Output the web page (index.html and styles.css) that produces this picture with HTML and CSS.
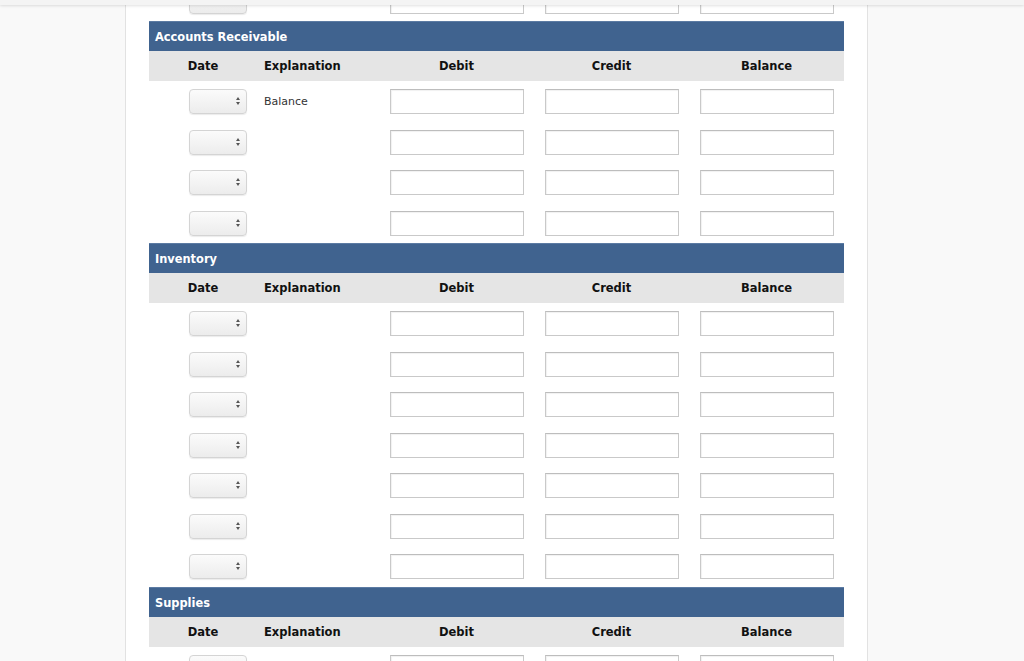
FILE: index.html
```html
<!DOCTYPE html>
<html>
<head>
<meta charset="utf-8">
<link rel="stylesheet" href="styles.css">
</head>
<body>
<div class="topbar"></div>
<div class="page">
  <div class="sheet">
    <div class="row row-cut">
      <div class="c-date"><span class="sel"></span></div>
      <div class="c-exp"></div>
      <div class="c-num"><span class="inp"></span></div>
      <div class="c-num"><span class="inp"></span></div>
      <div class="c-num"><span class="inp"></span></div>
    </div>

    <section class="acct">
      <div class="acct-title">Accounts Receivable</div>
      <div class="row head">
        <div class="c-date">Date</div>
        <div class="c-exp">Explanation</div>
        <div class="c-num">Debit</div>
        <div class="c-num">Credit</div>
        <div class="c-num">Balance</div>
      </div>
      <div class="row">
        <div class="c-date"><span class="sel"></span></div>
        <div class="c-exp">Balance</div>
        <div class="c-num"><span class="inp"></span></div>
        <div class="c-num"><span class="inp"></span></div>
        <div class="c-num"><span class="inp"></span></div>
      </div>
      <div class="row">
        <div class="c-date"><span class="sel"></span></div>
        <div class="c-exp"></div>
        <div class="c-num"><span class="inp"></span></div>
        <div class="c-num"><span class="inp"></span></div>
        <div class="c-num"><span class="inp"></span></div>
      </div>
      <div class="row">
        <div class="c-date"><span class="sel"></span></div>
        <div class="c-exp"></div>
        <div class="c-num"><span class="inp"></span></div>
        <div class="c-num"><span class="inp"></span></div>
        <div class="c-num"><span class="inp"></span></div>
      </div>
      <div class="row">
        <div class="c-date"><span class="sel"></span></div>
        <div class="c-exp"></div>
        <div class="c-num"><span class="inp"></span></div>
        <div class="c-num"><span class="inp"></span></div>
        <div class="c-num"><span class="inp"></span></div>
      </div>
    </section>

    <section class="acct">
      <div class="acct-title">Inventory</div>
      <div class="row head">
        <div class="c-date">Date</div>
        <div class="c-exp">Explanation</div>
        <div class="c-num">Debit</div>
        <div class="c-num">Credit</div>
        <div class="c-num">Balance</div>
      </div>
      <div class="row">
        <div class="c-date"><span class="sel"></span></div>
        <div class="c-exp"></div>
        <div class="c-num"><span class="inp"></span></div>
        <div class="c-num"><span class="inp"></span></div>
        <div class="c-num"><span class="inp"></span></div>
      </div>
      <div class="row">
        <div class="c-date"><span class="sel"></span></div>
        <div class="c-exp"></div>
        <div class="c-num"><span class="inp"></span></div>
        <div class="c-num"><span class="inp"></span></div>
        <div class="c-num"><span class="inp"></span></div>
      </div>
      <div class="row">
        <div class="c-date"><span class="sel"></span></div>
        <div class="c-exp"></div>
        <div class="c-num"><span class="inp"></span></div>
        <div class="c-num"><span class="inp"></span></div>
        <div class="c-num"><span class="inp"></span></div>
      </div>
      <div class="row">
        <div class="c-date"><span class="sel"></span></div>
        <div class="c-exp"></div>
        <div class="c-num"><span class="inp"></span></div>
        <div class="c-num"><span class="inp"></span></div>
        <div class="c-num"><span class="inp"></span></div>
      </div>
      <div class="row">
        <div class="c-date"><span class="sel"></span></div>
        <div class="c-exp"></div>
        <div class="c-num"><span class="inp"></span></div>
        <div class="c-num"><span class="inp"></span></div>
        <div class="c-num"><span class="inp"></span></div>
      </div>
      <div class="row">
        <div class="c-date"><span class="sel"></span></div>
        <div class="c-exp"></div>
        <div class="c-num"><span class="inp"></span></div>
        <div class="c-num"><span class="inp"></span></div>
        <div class="c-num"><span class="inp"></span></div>
      </div>
      <div class="row">
        <div class="c-date"><span class="sel"></span></div>
        <div class="c-exp"></div>
        <div class="c-num"><span class="inp"></span></div>
        <div class="c-num"><span class="inp"></span></div>
        <div class="c-num"><span class="inp"></span></div>
      </div>
    </section>

    <section class="acct">
      <div class="acct-title">Supplies</div>
      <div class="row head">
        <div class="c-date">Date</div>
        <div class="c-exp">Explanation</div>
        <div class="c-num">Debit</div>
        <div class="c-num">Credit</div>
        <div class="c-num">Balance</div>
      </div>
      <div class="row">
        <div class="c-date"><span class="sel"></span></div>
        <div class="c-exp"></div>
        <div class="c-num"><span class="inp"></span></div>
        <div class="c-num"><span class="inp"></span></div>
        <div class="c-num"><span class="inp"></span></div>
      </div>
    </section>
  </div>
</div>
</body>
</html>
```
FILE: styles.css
```css
html, body {
  margin: 0;
  padding: 0;
  height: 100%;
  overflow: hidden;
  background: #f9f9f9;
  font-family: "DejaVu Sans", Verdana, sans-serif;
  color: #000;
}

.topbar {
  position: fixed;
  top: 0;
  left: 0;
  right: 0;
  height: 5px;
  background: #f4f4f4;
  box-shadow: 0 1px 3px rgba(0,0,0,0.12);
  z-index: 5;
}

.page {
  display: flow-root;
  margin-left: 125px;
  width: 741px;
  min-height: 100%;
  background: #fff;
  border-left: 1px solid #e2e2e2;
  border-right: 1px solid #e2e2e2;
}

.sheet {
  padding-left: 23px;
  width: 695px;
}

.row {
  display: grid;
  grid-template-columns: 108px 122px 155px 155px 155px;
  height: 40.5px;
  align-items: start;
}

.row > div {
  padding-top: 8px;
}

.row-cut {
  margin-top: -19.5px;
}

.c-date {
  display: flex;
  justify-content: flex-start;
  padding-left: 40px;
}

.c-exp {
  padding-left: 7px;
  font-size: 11px;
  line-height: 26px;
  color: #333;
}

.c-num {
  display: flex;
  justify-content: center;
}

.head {
  height: 30px;
  background: #e5e5e5;
  align-items: center;
  font-weight: bold;
  font-size: 11.5px;
  color: #111;
}
.head > div {
  padding-top: 0;
  line-height: 31px;
}
.head .c-date {
  padding-left: 0;
  justify-content: center;
}
.head .c-exp {
  font-size: 11.5px;
  color: #111;
  line-height: 31px;
}

.acct-title {
  height: 30px;
  line-height: 31px;
  background: #40638f;
  color: #fff;
  font-weight: bold;
  font-size: 11.4px;
  padding-left: 6px;
  border-top: 1px solid #5c7ba3;
  box-sizing: border-box;
}

.sel {
  position: relative;
  display: block;
  width: 58px;
  height: 25px;
  box-sizing: border-box;
  border: 1px solid #d4d4d4;
  border-radius: 4px;
  background: linear-gradient(#fbfbfb, #ececec);
  box-shadow: 0 1px 1px rgba(0,0,0,0.08);
}
.sel::before,
.sel::after {
  content: "";
  position: absolute;
  right: 6px;
  width: 0;
  height: 0;
  border-left: 2.5px solid transparent;
  border-right: 2.5px solid transparent;
}
.sel::before {
  top: 7px;
  border-bottom: 3px solid #555;
}
.sel::after {
  top: 12px;
  border-top: 3px solid #555;
}

.inp {
  display: block;
  width: 134px;
  height: 25px;
  box-sizing: border-box;
  border: 1px solid #c9c9c9;
  border-top-color: #bdbdbd;
  background: #fff;
  box-shadow: inset 1px 1px 1px rgba(0,0,0,0.06);
}
```
